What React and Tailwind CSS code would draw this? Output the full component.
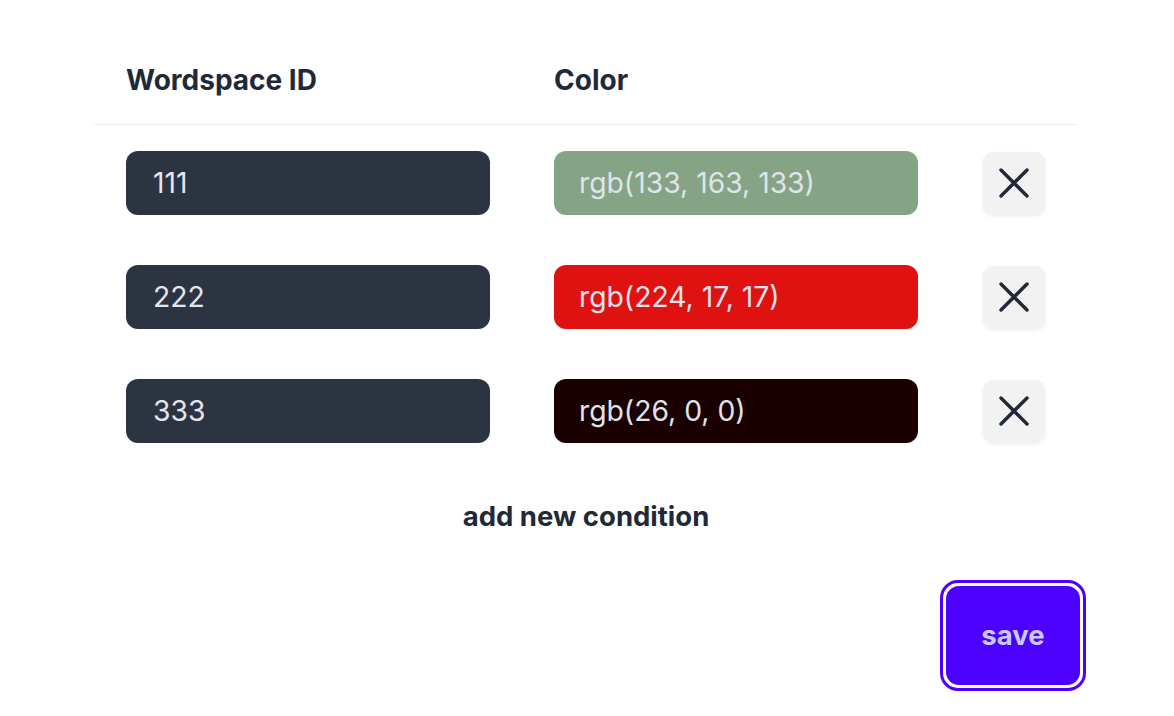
import React from "react";

const rows = [
  { id: "111", color: "rgb(133, 163, 133)", bg: "bg-[rgb(133,163,133)]" },
  { id: "222", color: "rgb(224, 17, 17)", bg: "bg-[rgb(224,17,17)]" },
  { id: "333", color: "rgb(26, 0, 0)", bg: "bg-[rgb(26,0,0)]" },
];

function XIcon() {
  return (
    <svg width="32" height="32" viewBox="0 0 32 32" fill="none">
      <path d="M3 3L29 29M29 3L3 29" stroke="#1f2937" strokeWidth="3.4" strokeLinecap="round" />
    </svg>
  );
}

export default function App() {
  return (
    <div className="w-[1174px] h-[716px] bg-white overflow-hidden font-['Inter',sans-serif] text-[#1f2937]">
      <div className="w-[984px] ml-[94px] pt-9">
        <div className="flex border-b border-[#ededed] pt-7 pb-7">
          <div className="w-[428px] px-8 text-[28px] font-bold leading-8">Wordspace ID</div>
          <div className="w-[428px] px-8 text-[28px] font-bold leading-8">Color</div>
          <div className="w-[128px]" />
        </div>
        {rows.map((r) => (
          <div key={r.id} className="flex items-center pt-[26px] pb-[24px]">
            <div className="w-[428px] px-8">
              <div className="h-16 rounded-xl bg-[#2d3441] flex items-center px-[27px] text-[28.3px] text-[#e2e6ee]">
                {r.id}
              </div>
            </div>
            <div className="w-[428px] px-8">
              <div className={`h-16 rounded-xl ${r.bg} flex items-center px-[25px] text-[28.3px] text-[#dfe3ea]`}>
                {r.color}
              </div>
            </div>
            <div className="w-[128px] flex justify-center">
              <button className="w-[62px] h-[62px] rounded-[10px] bg-[#f2f2f3] shadow-[0_2px_4px_rgba(0,0,0,0.08)] flex items-center justify-center">
                <XIcon />
              </button>
            </div>
          </div>
        ))}
        <div className="text-center text-[27.5px] font-bold leading-8 mt-[33px]">add new condition</div>
      </div>
      <div className="flex justify-end pr-[88px] mt-[48px]">
        <div className="rounded-[18px] border-[3px] border-[#4c00ff] p-[3px] bg-white">
          <button className="w-[134px] h-[99px] rounded-[13px] bg-[#4c00ff] text-[#c8caff] text-[27.5px] font-bold flex items-center justify-center">
            save
          </button>
        </div>
      </div>
    </div>
  );
}
